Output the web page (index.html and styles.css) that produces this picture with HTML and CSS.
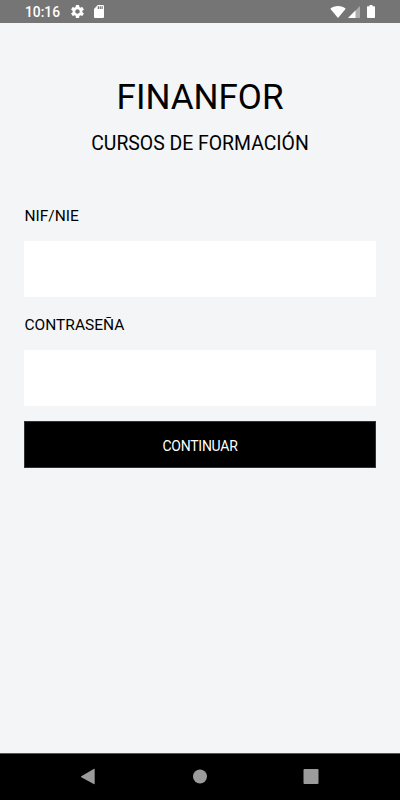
FILE: index.html
```
<!DOCTYPE html>
<html lang="es">
<head>
  <meta charset="UTF-8">
  <meta name="viewport" content="width=device-width, initial-scale=1.0">
  <title>Finanfor</title>
  <link rel="stylesheet" href="styles.css">
</head>
<body>
  <div class="status-bar">
    <span class="clock">10:16</span>
    <svg class="icon-settings" width="13" height="13" viewBox="2 2 20 20" fill="#fff"><path d="M19.43 12.98c.04-.32.07-.64.07-.98s-.03-.66-.07-.98l2.11-1.65c.19-.15.24-.42.12-.64l-2-3.46c-.12-.22-.39-.3-.61-.22l-2.49 1c-.52-.4-1.08-.73-1.69-.98l-.38-2.65C14.46 2.18 14.25 2 14 2h-4c-.25 0-.46.18-.49.42l-.38 2.65c-.61.25-1.17.59-1.69.98l-2.49-1c-.23-.09-.49 0-.61.22l-2 3.46c-.13.22-.07.49.12.64l2.11 1.65c-.04.32-.07.65-.07.98s.03.66.07.98l-2.11 1.65c-.19.15-.24.42-.12.64l2 3.46c.12.22.39.3.61.22l2.49-1c.52.4 1.08.73 1.69.98l.38 2.65c.03.24.24.42.49.42h4c.25 0 .46-.18.49-.42l.38-2.65c.61-.25 1.17-.59 1.69-.98l2.49 1c.23.09.49 0 .61-.22l2-3.46c.12-.22.07-.49-.12-.64l-2.11-1.65zM12 15.5c-1.93 0-3.5-1.57-3.5-3.5s1.57-3.5 3.5-3.5 3.5 1.57 3.5 3.5-1.57 3.5-3.5 3.5z"/></svg>
    <svg class="icon-sd" width="10" height="13" viewBox="4 2 16 20" preserveAspectRatio="none" fill="#fff"><path d="M18 2h-8L4 8v12c0 1.1.9 2 2 2h12c1.1 0 2-.9 2-2V4c0-1.1-.9-2-2-2zm-6 6h-2V4h2v4zm3 0h-2V4h2v4zm3 0h-2V4h2v4z"/></svg>
    <div class="signals">
      <svg width="16" height="12" viewBox="0 0 16 12" fill="#fff"><path d="M8 12 .3 2.7C2.3 1 5 0 8 0s5.700 1 7.700 2.700z"/></svg>
      <svg class="icon-cell" width="12" height="12" viewBox="0 0 12 12"><path d="M0 12 12 0v12z" fill="#fff" opacity=".4"/><path d="M0 12 7.500 4.500V12z" fill="#fff"/></svg>
      <svg class="icon-battery" width="8" height="13" viewBox="0 0 8 13" fill="#fff"><path d="M2.500 0h3v1.300H7.300q.7 0 .7.700v10.300q0 .7-.7.700H.7q-.7 0-.7-.7V2q0-.7.7-.7h1.800z"/></svg>
    </div>
  </div>

  <main class="login">
    <h1>FINANFOR</h1>
    <h2>CURSOS DE FORMACIÓN</h2>
    <form id="loginForm">
      <label for="nif">NIF/NIE</label>
      <input type="text" id="nif" name="nif">
      <label for="password">CONTRASEÑA</label>
      <input type="password" id="password" name="password">
      <button type="submit">CONTINUAR</button>
    </form>
  </main>

  <nav class="nav-bar">
    <svg width="16" height="18" viewBox="0 0 16 18" fill="#9b9b9b"><path d="M1.300 8.300 13.700 1q1-.5 1 .5v14q0 1-1 .5L1.300 9.200q-.8-.45 0-.9z"/></svg>
    <svg width="16" height="18" viewBox="0 0 16 18" fill="#9b9b9b"><circle cx="8" cy="8.500" r="7"/></svg>
    <svg width="16" height="18" viewBox="0 0 16 18" fill="#9b9b9b"><rect x=".5" y="1" width="15" height="15" rx="1"/></svg>
  </nav>
</body>
</html>
```

FILE: styles.css
```
* {
  box-sizing: border-box;
}

body {
  font-family: Roboto, sans-serif;
  background-color: #f3f5f7;
  color: #000;
  display: flex;
  flex-direction: column;
  height: 100vh;
  margin: 0;
}

.status-bar {
  display: flex;
  align-items: center;
  height: 23px;
  padding: 0 25px;
  background-color: #757575;
  color: #fff;
}

.clock {
  font-size: 13.8px;
  font-weight: 500;
  line-height: 16px;
  width: 46px;
}

.icon-sd {
  margin-left: 10px;
}

.signals {
  display: flex;
  align-items: center;
  margin-left: auto;
}

.icon-cell {
  margin-left: 2px;
}

.icon-battery {
  margin-left: 7px;
}

.login {
  flex: 1;
  padding: 55px 24px 0;
}

h1 {
  font-size: 35px;
  font-weight: 400;
  line-height: 40px;
  margin: 0;
  text-align: center;
}

h2 {
  font-size: 19.4px;
  font-weight: 400;
  line-height: 24px;
  margin: 14px 0 0;
  text-align: center;
}

form {
  display: flex;
  flex-direction: column;
  margin-top: 50px;
}

label {
  font-size: 15.5px;
  line-height: 20px;
  padding-left: 0.5px;
}

input {
  width: 100%;
  height: 56px;
  margin: 15px 0 18px;
  padding: 0 12px;
  border: none;
  background-color: #fff;
  font-family: inherit;
  font-size: 16px;
}

input:focus {
  outline: none;
}

button {
  height: 47px;
  margin-top: -3px;
  padding: 2px 0 0;
  border: 1px solid #333;
  background-color: #000;
  color: #fff;
  font-family: inherit;
  font-size: 14px;
  letter-spacing: -0.25px;
}

.nav-bar {
  display: flex;
  align-items: center;
  justify-content: space-between;
  height: 47px;
  padding: 0 81px 0 80px;
  border-top: 1px solid #555;
  background-color: #000;
}
```
